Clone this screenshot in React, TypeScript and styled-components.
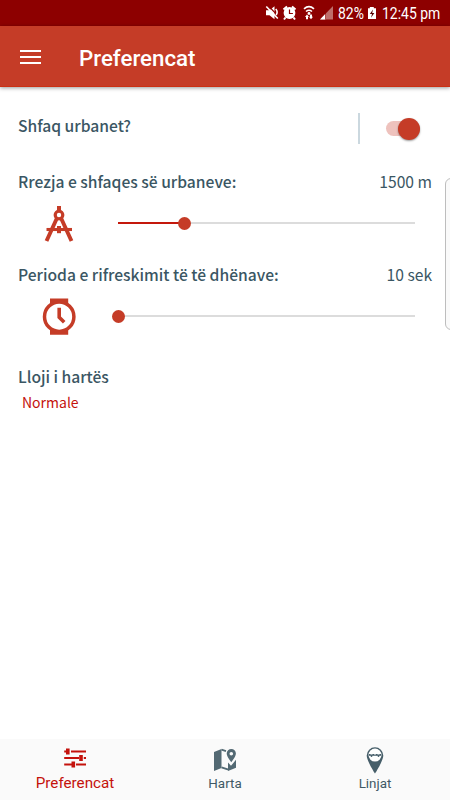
import React from "react";
import styled, { createGlobalStyle } from "styled-components";

const RED = "#c53c27";
const SLATE = "#3a5663";

const GlobalStyle = createGlobalStyle`
  *, *::before, *::after { box-sizing: border-box; }
  body { margin: 0; background: #fff; overflow: hidden; }
  svg { display: block; flex: none; }
`;

const Screen = styled.div`
  position: relative;
  display: flex;
  flex-direction: column;
  width: 450px;
  height: 800px;
  background: #fff;
  color: ${SLATE};
  font-family: "Noto Sans CJK SC", "Open Sans", sans-serif;
`;

const StatusBar = styled.div`
  display: flex;
  flex: none;
  height: 26px;
  background: #8d0000;
  color: #fff;
  padding-left: 264px;
  align-items: center;
`;

const StatusText = styled.span<{ $width: number }>`
  width: ${(p) => p.$width}px;
  font: 400 17px/26px Roboto, sans-serif;
  white-space: nowrap;
  transform: scaleX(0.82);
  transform-origin: left center;
`;

const AppBar = styled.header`
  display: flex;
  flex: none;
  align-items: center;
  height: 61px;
  padding: 0 0 0 20px;
  background: ${RED};
  color: #fff;
  border-bottom: 1px solid #cb3013;
  box-shadow: 0 1px 4px rgba(0, 0, 0, 0.4);
`;

const MenuButton = styled.button`
  display: flex;
  flex-direction: column;
  gap: 4px;
  width: 21px;
  margin-top: 1px;
  padding: 0;
  border: 0;
  background: none;
`;

const MenuLine = styled.span`
  height: 2px;
  background: #fff;
`;

const Title = styled.h1`
  margin: 3px 0 0 38px;
  font: 500 22.3px/30px Roboto, sans-serif;
`;

const Content = styled.main`
  display: flex;
  flex-direction: column;
  flex: 1;
  padding: 24px 18px 0 18px;
`;

const Row = styled.div<{ $height: number; $top?: number }>`
  display: flex;
  align-items: center;
  justify-content: space-between;
  height: ${(p) => p.$height}px;
  padding-top: ${(p) => p.$top ?? 0}px;
`;

const Label = styled.span`
  font-size: 15.64px;
  font-weight: 500;
  line-height: 24px;
  white-space: nowrap;
`;

const Value = styled.span`
  font-size: 15.64px;
  line-height: 24px;
`;

const SwitchCell = styled.div`
  display: flex;
  align-items: center;
  width: 74px;
  height: 31px;
  padding-left: 26px;
  margin-top: 6px;
  border-left: 2px solid #cbd8df;
`;

const SwitchTrack = styled.div`
  display: flex;
  align-items: center;
  justify-content: flex-end;
  width: 34px;
  height: 15px;
  border-radius: 8px;
  background: #eec2bd;
`;

const SwitchKnob = styled.div`
  flex: none;
  width: 22px;
  height: 22px;
  border-radius: 50%;
  background: ${RED};
  box-shadow: 0 1px 2px rgba(0, 0, 0, 0.4);
`;

const SliderRow = styled.div`
  display: flex;
  align-items: center;
  height: 40px;
  padding-left: 23px;
`;

const Slider = styled.div`
  display: flex;
  align-items: center;
  width: 297px;
  margin-left: 41px;
`;

const SliderFill = styled.div<{ $width: number }>`
  width: ${(p) => p.$width}px;
  height: 2px;
  background: #c4180c;
`;

const SliderThumb = styled.div`
  flex: none;
  width: 13px;
  height: 13px;
  margin: 0 -6.5px;
  border-radius: 50%;
  background: ${RED};
  z-index: 1;
`;

const SliderRest = styled.div`
  flex: 1;
  height: 2px;
  background: #dcdcdc;
`;

const MapType = styled.span`
  margin: 1px 0 0 4px;
  color: #c4120c;
  font-size: 14px;
  line-height: 24px;
`;

const EdgePanel = styled.div`
  position: absolute;
  top: 178px;
  right: -7px;
  width: 12px;
  height: 152px;
  border: 1px solid #bdbdbd;
  border-radius: 6px;
  background: #fafafa;
  clip-path: inset(0 7px 0 0);
`;

const BottomNav = styled.nav`
  display: grid;
  grid-template-columns: repeat(3, 1fr);
  flex: none;
  height: 61px;
  background: #fafafa;
`;

const Tab = styled.a<{ $active?: boolean }>`
  display: flex;
  flex-direction: column;
  align-items: center;
  padding-top: 7px;
  color: ${(p) => (p.$active ? "#c4120c" : "#3f5965")};
  font: 400 ${(p) => (p.$active ? 15.2 : 13.4)}px/${(p) => (p.$active ? 17 : 18)}px Roboto, sans-serif;
`;

const TabIcon = styled.span`
  display: flex;
  height: 29px;
`;

const StatusIcons = () => (
  <svg width="74" height="26" viewBox="264 0 74 26" fill="#fff">
    <path d="M266 10.300h3.500l5-4v13l-5-4H266z" />
    <path d="M268.500 6l9.500 9.800" stroke="#8d0000" strokeWidth="1.200" />
    <path d="M266.300 6.500l11.500 12M275.800 9q2.500 3 .3 6" stroke="#fff" strokeWidth="1.600" fill="none" />
    <circle cx="289.500" cy="13" r="5.900" />
    <path d="M283.500 9.500l3.500-3M295.500 9.500l-3.500-3M285.500 17.500l-1.500 2M293.500 17.500l1.500 2" stroke="#fff" strokeWidth="2" />
    <path d="M289.500 9.500v4h3.400" stroke="#8d0000" strokeWidth="1.200" fill="none" />
    <path d="M304 8.800q5-4.500 10 0M306 11.500q3-2.500 6 0" stroke="#fff" strokeWidth="1.600" fill="none" />
    <circle cx="309" cy="13.500" r="1.400" />
    <path d="M305 17l2-2.500 2 2.500h-1v2.200h-2V17zM309 16.700h1v-2.200h2v2.200h1l-2 2.500z" />
    <path d="M333 6v13.500h-13z" fill="#be6e6b" />
    <path d="M325.500 13.800v5.700H320z" />
    <path d="M325.500 13v6.500" stroke="#8d0000" strokeWidth=".6" />
  </svg>
);

const Battery = () => (
  <svg width="18" height="26" viewBox="0 0 18 26">
    <path d="M5.800 7h4v1.300H12V19H4V8.300h1.800z" fill="#fff" />
    <path d="M9 9.500l-3.200 4.600h2.200L7 17.700l3.400-4.800H8.200z" fill="#560000" />
  </svg>
);

const CompassIcon = () => (
  <svg width="36" height="38" viewBox="0 -1 36 38" fill="none" stroke={RED}>
    <path d="M18 1v5" strokeWidth="4" />
    <circle cx="18" cy="10" r="3.800" strokeWidth="3.200" />
    <path d="M16 13L5.500 36M20 13l10.500 23" strokeWidth="3.900" />
    <path d="M5.500 24.500h25.500" strokeWidth="3.100" />
    <path d="M18 21v7.200" strokeWidth="4" />
  </svg>
);

const WatchIcon = () => (
  <svg width="36" height="38" viewBox="0 -.7 36 38" fill="none" stroke={RED}>
    <path d="M9 .8h18.200v7H9zM9 30h18.200v7H9z" fill={RED} stroke="none" />
    <circle cx="18.200" cy="19" r="14.700" fill="#fff" strokeWidth="3.500" />
    <path d="M18.200 10v9.500l5 5" strokeWidth="3.600" />
  </svg>
);

const TuneIcon = () => (
  <svg width="24" height="24" viewBox="0 0 24 24" fill="none" stroke="#c4120c">
    <path d="M1.200 5.500H3m5 0h15M1.200 12H16m4.800 0H23M1.200 18.500H9m4 0h10" strokeWidth="2" />
    <path d="M4.800 2.500v6M18 9v6M10.300 15.500v6" strokeWidth="3.600" />
  </svg>
);

const MapIcon = () => (
  <svg width="24" height="26" viewBox="0 0 24 26" fill="#536973">
    <path d="M1 6l7.500-3v19L1 25z" />
    <path d="M8.500 3.700l4.500 1.500M8.500 21.300l7 2.400" stroke="#536973" strokeWidth="1.800" />
    <path d="M15 16.500l3 3.300 5-6v8L15 25z" />
    <path fillRule="evenodd" d="M18.300 3a4.600 4.600 0 0 0-4.600 4.600c0 3.300 4.600 8.700 4.600 8.700s4.600-5.400 4.600-8.700A4.600 4.600 0 0 0 18.300 3zm0 2.900a1.800 1.800 0 1 1 0 3.600 1.800 1.800 0 0 1 0-3.600z" />
  </svg>
);

const BusPinIcon = () => (
  <svg width="18" height="28" viewBox="0 -.8 18 28" fill="#465e69">
    <path d="M9 .5a8.300 8.300 0 0 0-8.300 8.300C.7 14 9 26.800 9 26.800S17.300 14 17.300 8.800A8.300 8.300 0 0 0 9 .5z" />
    <circle cx="9" cy="8.300" r="6.500" fill="#fff" />
    <path d="M3 7.200h12v1.800H3z" />
    <path d="M4.500 7.800h2M8 7.800h2M11.500 7.800h2" stroke="#dce3e6" strokeWidth=".7" />
    <circle cx="5.500" cy="9.200" r=".9" />
    <circle cx="12.500" cy="9.200" r=".9" />
  </svg>
);

export default function App() {
  return (
    <Screen>
      <GlobalStyle />
      <StatusBar>
        <StatusIcons />
        <StatusText $width={26}>82%</StatusText>
        <Battery />
        <StatusText $width={60}>12:45 pm</StatusText>
      </StatusBar>
      <AppBar>
        <MenuButton aria-label="Menu">
          <MenuLine />
          <MenuLine />
          <MenuLine />
        </MenuButton>
        <Title>Preferencat</Title>
      </AppBar>
      <Content>
        <Row $height={29}>
          <Label>Shfaq urbanet?</Label>
          <SwitchCell>
            <SwitchTrack>
              <SwitchKnob />
            </SwitchTrack>
          </SwitchCell>
        </Row>
        <Row $height={63} $top={21}>
          <Label>Rrezja e shfaqes së urbaneve:</Label>
          <Value>1500 m</Value>
        </Row>
        <SliderRow>
          <CompassIcon />
          <Slider>
            <SliderFill $width={66} />
            <SliderThumb />
            <SliderRest />
          </Slider>
        </SliderRow>
        <Row $height={53} $top={11}>
          <Label>Perioda e rifreskimit të të dhënave:</Label>
          <Value>10 sek</Value>
        </Row>
        <SliderRow>
          <WatchIcon />
          <Slider>
            <SliderFill $width={0} />
            <SliderThumb />
            <SliderRest />
          </Slider>
        </SliderRow>
        <Row $height={53} $top={29}>
          <Label>Lloji i hartës</Label>
        </Row>
        <MapType>Normale</MapType>
      </Content>
      <EdgePanel />
      <BottomNav>
        <Tab $active>
          <TabIcon><TuneIcon /></TabIcon>
          Preferencat
        </Tab>
        <Tab>
          <TabIcon><MapIcon /></TabIcon>
          Harta
        </Tab>
        <Tab>
          <TabIcon><BusPinIcon /></TabIcon>
          Linjat
        </Tab>
      </BottomNav>
    </Screen>
  );
}
